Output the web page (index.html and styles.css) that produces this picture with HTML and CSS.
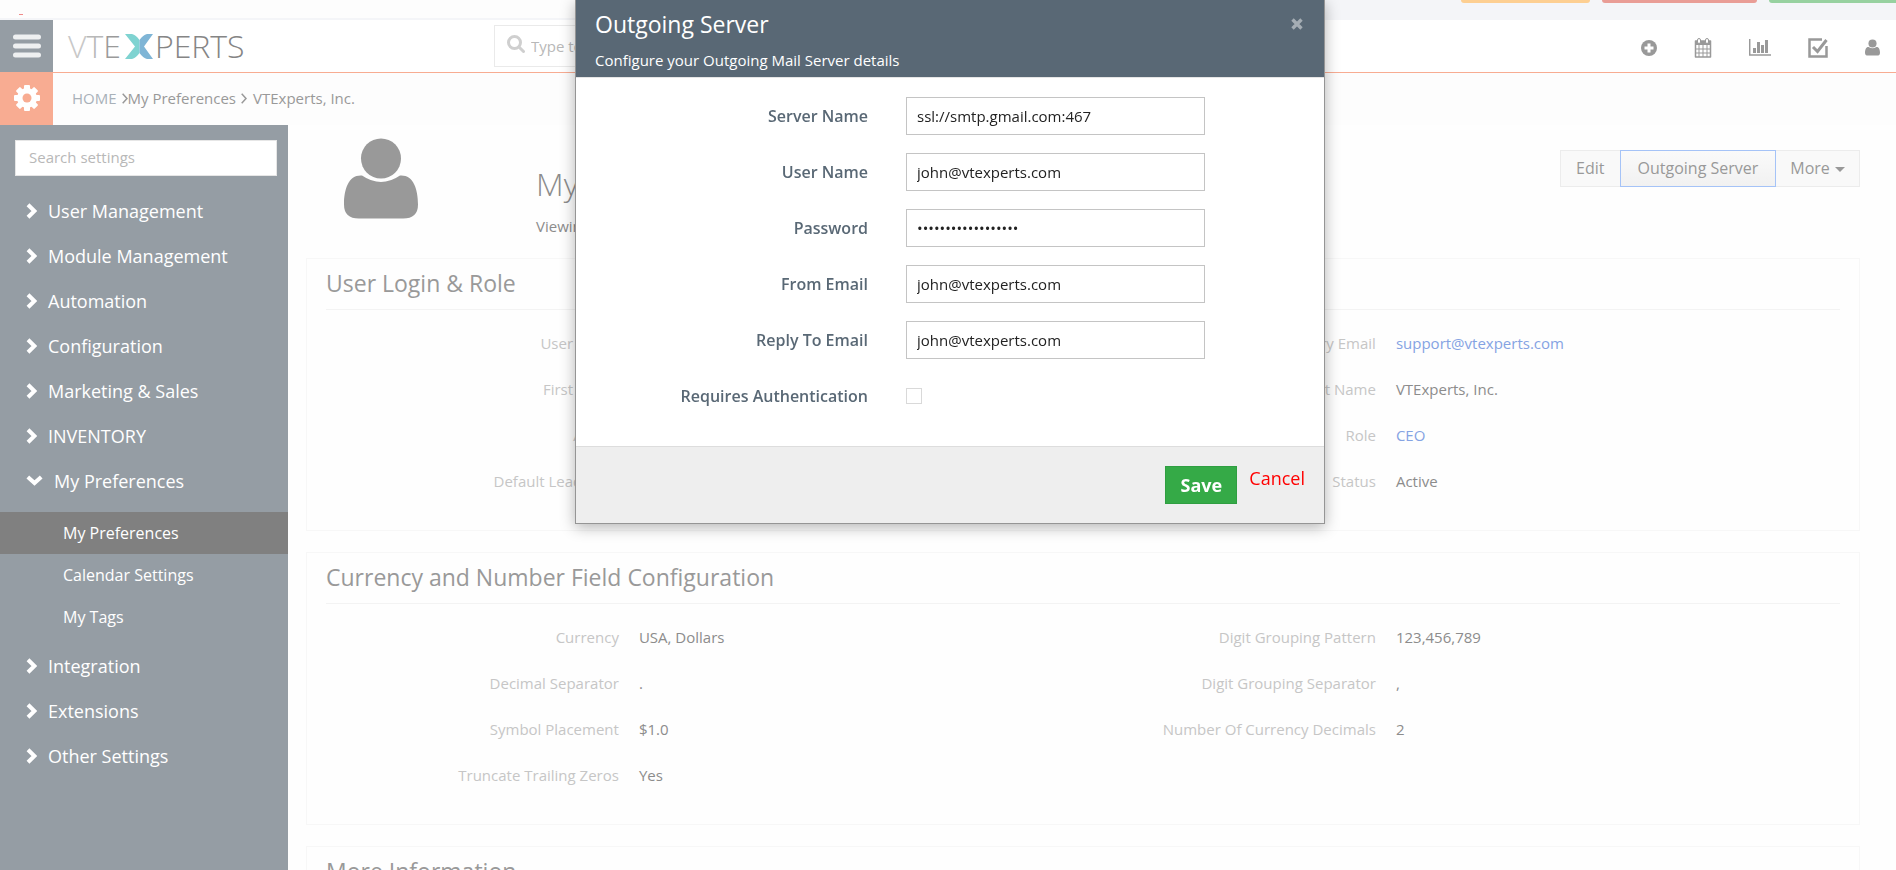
FILE: index.html
```html
<!DOCTYPE html>
<html lang="en">
<head>
  <meta charset="utf-8"/>
  <title>VTExperts - My Preferences</title>
  <link rel="stylesheet" href="styles.css">
</head>
<body>
	<svg class="sprite" aria-hidden="true">
		<symbol id="icoUser" viewBox="0 0 74 80">
			<ellipse cx="37" cy="20" rx="20" ry="20"/>
			<path d="M18 37 Q37 50 56 37 C69 36 74 50 74 66 Q74 80 59 80 H15 Q0 80 0 66 C0 50 5 36 18 37z"/>
		</symbol>
		<symbol id="icoRight" viewBox="0 0 11 16">
			<path d="M2 1.8 L8.4 8 L2 14.2" fill="none" stroke="currentColor" stroke-width="4"/>
		</symbol>
		<symbol id="icoDown" viewBox="0 0 17 11">
			<path d="M1.8 2 L8.5 8 L15.2 2" fill="none" stroke="currentColor" stroke-width="4"/>
		</symbol>
	</svg>

	<div class="topstrip">
		<div class="tab"></div>
		<div class="tags">
			<span class="tag orange"></span>
			<span class="tag red"></span>
			<span class="tag green"></span>
		</div>
	</div>

	<header class="header">
		<button class="menu" aria-label="Menu">
			<svg width="28" height="24" viewBox="0 0 28 24"><path d="M2.500 3H25.500M2.500 12H25.500M2.500 21H25.500" stroke="#eef0f1" stroke-width="5" stroke-linecap="round"/></svg>
		</button>
		<a class="logo" href="#" aria-label="VTExperts">
			<span class="logo-v">V</span><span class="logo-t">T</span><span class="logo-e">E</span>
			<svg width="29" height="25" viewBox="0 0 29 25">
				<path d="M0 0 H7 Q11 1 14.500 6 V19 Q11 24 7 25 H0 L10 12.500z" fill="#7fd3d1"/>
				<path d="M28 0 H22 Q18 1 14.500 6 V19 Q18 24 22 25 H28 L19 12.500z" fill="#7fb5d6"/>
			</svg>
			<span class="logo-rest">PERTS</span>
		</a>
		<form class="search">
			<svg width="18" height="18" viewBox="0 0 18 18"><circle cx="7.500" cy="7.500" r="6" fill="none" stroke="#cfcfcf" stroke-width="3"/><path d="M12 12 L16.500 16.500" stroke="#cfcfcf" stroke-width="3" stroke-linecap="round"/></svg>
			<input type="text" placeholder="Type to search" aria-label="Search">
		</form>
		<nav class="tools">
			<a href="#" aria-label="Quick create">
				<svg width="16" height="16" viewBox="0 0 16 16"><circle cx="8" cy="8" r="8"/><path d="M8 3.500V12.500M3.500 8H12.500" stroke="#fff" stroke-width="3"/></svg>
			</a>
			<a href="#" aria-label="Calendar">
				<svg width="18" height="20" viewBox="0 0 18 20"><path d="M1.500 3H16.500V19H1.500z" fill="none" stroke="#999" stroke-width="1.500" stroke-linejoin="round"/><path d="M1 3H17V7H1z"/><path d="M5 7V19M9 7V19M13 7V19M1 11H17M1 15H17" stroke="#999" stroke-width="1"/><rect x="3.500" y="0.500" width="3" height="5" rx="1.500" fill="#fff" stroke="#999"/><rect x="11.500" y="0.500" width="3" height="5" rx="1.500" fill="#fff" stroke="#999"/></svg>
			</a>
			<a href="#" aria-label="Reports">
				<svg width="22" height="17" viewBox="0 0 22 17"><path d="M0.700 0V16H22" fill="none" stroke="#999" stroke-width="1.500"/><path d="M4 9H7V14H4zM8 3H11V14H8zM12 6H15V14H12zM16 1H19V14H16z"/></svg>
			</a>
			<a href="#" aria-label="Tasks">
				<svg width="20" height="20" viewBox="0 0 20 20"><path d="M14 1.500H1.500V18.500H18.500V8" fill="none" stroke="#999" stroke-width="2.500"/><path d="M5 9L9.500 13.500L18.500 2" fill="none" stroke="#999" stroke-width="3"/></svg>
			</a>
			<a href="#" aria-label="User">
				<svg width="15" height="17"><use href="#icoUser"/></svg>
			</a>
		</nav>
	</header>

	<div class="crumbbar">
		<a class="gear" href="#" aria-label="Settings">
			<svg width="26" height="26" viewBox="-13 -13 26 26">
				<g fill="#fff">
					<circle r="10"/>
					<rect x="-3" y="-13" width="6" height="26" rx="1"/>
					<rect x="-3" y="-13" width="6" height="26" rx="1" transform="rotate(45)"/>
					<rect x="-3" y="-13" width="6" height="26" rx="1" transform="rotate(90)"/>
					<rect x="-3" y="-13" width="6" height="26" rx="1" transform="rotate(135)"/>
				</g>
				<circle r="4.500" fill="#f8ac92"/>
			</svg>
		</a>
		<nav class="crumbs">
			<a class="home" href="#">HOME</a>
			<svg width="6" height="11" viewBox="0 0 6 11"><path d="M0.700 0.700L5 5.500L0.700 10.300" fill="none" stroke="#999" stroke-width="1.500"/></svg>
			<a href="#">My Preferences</a>
			<svg class="sep" width="6" height="11" viewBox="0 0 6 11"><path d="M0.700 0.700L5 5.500L0.700 10.300" fill="none" stroke="#999" stroke-width="1.500"/></svg>
			<a href="#">VTExperts, Inc.</a>
		</nav>
	</div>

	<div class="page">
		<aside class="sidebar">
			<input class="filter" type="text" placeholder="Search settings" aria-label="Search settings">
			<ul class="groups">
				<li><a href="#"><svg width="11" height="16"><use href="#icoRight"/></svg>User Management</a></li>
				<li><a href="#"><svg width="11" height="16"><use href="#icoRight"/></svg>Module Management</a></li>
				<li><a href="#"><svg width="11" height="16"><use href="#icoRight"/></svg>Automation</a></li>
				<li><a href="#"><svg width="11" height="16"><use href="#icoRight"/></svg>Configuration</a></li>
				<li><a href="#"><svg width="11" height="16"><use href="#icoRight"/></svg>Marketing &amp; Sales</a></li>
				<li><a href="#"><svg width="11" height="16"><use href="#icoRight"/></svg>INVENTORY</a></li>
				<li>
					<a href="#"><svg width="17" height="11"><use href="#icoDown"/></svg>My Preferences</a>
					<ul class="sub">
						<li><a class="active" href="#">My Preferences</a></li>
						<li><a href="#">Calendar Settings</a></li>
						<li><a href="#">My Tags</a></li>
					</ul>
				</li>
				<li><a href="#"><svg width="11" height="16"><use href="#icoRight"/></svg>Integration</a></li>
				<li><a href="#"><svg width="11" height="16"><use href="#icoRight"/></svg>Extensions</a></li>
				<li><a href="#"><svg width="11" height="16"><use href="#icoRight"/></svg>Other Settings</a></li>
			</ul>
		</aside>

		<main class="content">
			<div class="title">
				<svg class="avatar" width="74" height="81"><use href="#icoUser"/></svg>
				<div class="title-text">
					<h1>My Preferences</h1>
					<p>Viewing details</p>
				</div>
				<div class="actions">
					<button>Edit</button>
					<button class="focus">Outgoing Server</button>
					<button>More <span class="caret"></span></button>
				</div>
			</div>

			<section class="block">
				<h2>User Login &amp; Role</h2>
				<dl class="fields">
					<div><dt>User Name</dt><dd>john</dd></div>
					<div><dt>Primary Email</dt><dd><a href="#">support@vtexperts.com</a></dd></div>
					<div><dt>First Name</dt><dd>John</dd></div>
					<div><dt>Last Name</dt><dd>VTExperts, Inc.</dd></div>
					<div><dt>Admin</dt><dd>Yes</dd></div>
					<div><dt>Role</dt><dd><a href="#">CEO</a></dd></div>
					<div><dt>Default Lead View</dt><dd>Today</dd></div>
					<div><dt>Status</dt><dd>Active</dd></div>
				</dl>
			</section>

			<section class="block">
				<h2>Currency and Number Field Configuration</h2>
				<dl class="fields">
					<div><dt>Currency</dt><dd>USA, Dollars</dd></div>
					<div><dt>Digit Grouping Pattern</dt><dd>123,456,789</dd></div>
					<div><dt>Decimal Separator</dt><dd>.</dd></div>
					<div><dt>Digit Grouping Separator</dt><dd>,</dd></div>
					<div><dt>Symbol Placement</dt><dd>$1.0</dd></div>
					<div><dt>Number Of Currency Decimals</dt><dd>2</dd></div>
					<div><dt>Truncate Trailing Zeros</dt><dd>Yes</dd></div>
				</dl>
			</section>

			<section class="block">
				<h2>More Information</h2>
			</section>
		</main>
	</div>

	<div class="overlay">
		<form class="modal" role="dialog" aria-labelledby="modalTitle">
			<div class="modal-header">
				<div>
					<h3 id="modalTitle">Outgoing Server</h3>
					<p>Configure your Outgoing Mail Server details</p>
				</div>
				<button type="button" class="close" aria-label="Close">
					<svg width="12" height="12" viewBox="0 0 12 12"><path d="M1.500 1.500L10.500 10.500M10.500 1.500L1.500 10.500" stroke="#a5adb4" stroke-width="3.400"/></svg>
				</button>
			</div>
			<div class="modal-body">
				<label for="txServer">Server Name</label>
				<input type="text" id="txServer" value="ssl://smtp.gmail.com:467">
				<label for="txUser">User Name</label>
				<input type="text" id="txUser" value="john@vtexperts.com">
				<label for="txPassword">Password</label>
				<input type="password" id="txPassword" value="abcdefghijklmnopqr">
				<label for="txFrom">From Email</label>
				<input type="text" id="txFrom" value="john@vtexperts.com">
				<label for="txReply">Reply To Email</label>
				<input type="text" id="txReply" value="john@vtexperts.com">
				<label for="cbAuth">Requires Authentication</label>
				<input type="checkbox" id="cbAuth">
			</div>
			<div class="modal-footer">
				<button type="submit" class="save">Save</button>
				<a class="cancel" href="#">Cancel</a>
			</div>
		</form>
	</div>
</body>
</html>
```
FILE: styles.css
```css
* {
	box-sizing: border-box;
}

body {
	margin: 0;
	height: 100vh;
	overflow: hidden;
	display: flex;
	flex-direction: column;
	background-color: #fefefe;
	color: #8c8c8c;
	font-family: "Open Sans", sans-serif;
	font-size: 15px;
	line-height: 20px;
}

a {
	color: inherit;
	text-decoration: none;
}

ul, dl, dd, h1, h2, h3, p {
	margin: 0;
	padding: 0;
	list-style: none;
}

button, input {
	font-family: inherit;
	font-size: inherit;
}

svg {
	flex: none;
	fill: #999;
}

.sprite {
	position: absolute;
	width: 0;
	height: 0;
}

/* strip above the header */
.topstrip {
	flex: none;
	height: 20px;
	display: flex;
	justify-content: space-between;
	background-color: #f4f5f8;
}

.tab {
	width: 32%;
	height: 18px;
	background-color: #fdfdfd;
}

.tab::before {
	content: "";
	display: block;
	width: 4px;
	height: 14px;
	margin-left: 19px;
	border-bottom: 1px solid #f08a8a;
}

.tags {
	display: flex;
	gap: 12px;
}

.tag {
	height: 3px;
	border-radius: 0 0 3px 3px;
}

.orange {
	width: 129px;
	background-color: #fdcf92;
}

.red {
	width: 155px;
	background-color: #e99d96;
}

.green {
	width: 127px;
	background-color: #97d1a0;
	border-radius: 0 0 0 3px;
}

.header {
	flex: none;
	height: 53px;
	display: flex;
	align-items: center;
	background-color: #fff;
	border-bottom: 1px solid #f8ac92;
}

.menu {
	width: 53px;
	height: 52px;
	padding: 3px 0 0;
	border: 0;
	background-color: #959da4;
}

.logo {
	display: flex;
	align-items: center;
	width: 441px;
	padding-left: 15px;
	font-size: 32px;
	font-weight: 300;
	line-height: 52px;
	color: #858585;
}

.logo svg {
	margin: 0 1px 0 4px;
}

.logo-v {
	color: #c8c8c8;
}

.logo-t {
	color: #b8b8b8;
}

.logo-e {
	color: #9a9a9a;
}

.search {
	display: flex;
	align-items: center;
	gap: 6px;
	width: 400px;
	height: 42px;
	padding: 0 12px;
	border: 1px solid #eaeaea;
}

.search svg {
	margin-bottom: 4px;
}

.search input {
	flex: 1;
	padding: 0;
	border: 0;
	color: #aaa;
}

.tools {
	display: flex;
	align-items: center;
	gap: 37px;
	margin-left: auto;
	padding: 3px 16px 0 0;
}

.tools a {
	display: flex;
}

.crumbbar {
	flex: none;
	display: flex;
	height: 52px;
	background-color: #fdfdfd;
}

.gear {
	width: 53px;
	display: flex;
	align-items: center;
	justify-content: center;
	padding-bottom: 3px;
	background-color: #f8ac92;
}

.crumbs {
	display: flex;
	align-items: center;
	padding: 0 0 2px 19px;
	color: #999;
}

.home {
	margin-right: 5px;
	color: #a9b1b9;
}

.sep {
	margin: 0 6px 0 5px;
}

.page {
	flex: 1;
	min-height: 0;
	display: flex;
}

/* settings menu */
.sidebar {
	flex: none;
	width: 288px;
	padding-top: 15px;
	background-color: #959da4;
	color: #fff;
}

.filter {
	display: block;
	width: 262px;
	height: 36px;
	margin: 0 0 12px 15px;
	padding: 0 13px 2px;
	border: 1px solid #e6e6e6;
}

input::placeholder {
	color: #b8b8b8;
}

.groups a {
	display: flex;
	align-items: center;
	gap: 11px;
	height: 45px;
	padding-left: 26px;
	font-size: 18px;
}

.groups svg {
	color: #fff;
}

.groups .sub {
	padding: 9px 0 5px;
}

.groups .sub a {
	height: 42px;
	padding-left: 63px;
	font-size: 16px;
}

.groups .sub .active {
	background-color: #808080;
}

.content {
	flex: 1;
	min-width: 0;
	padding: 0 36px 0 18px;
}

.title {
	display: flex;
	align-items: flex-start;
	height: 133px;
}

.avatar {
	margin: 13px 118px 0 38px;
}

.title-text {
	flex: 1;
	padding-top: 37px;
}

h1 {
	margin-bottom: 10px;
	font-size: 32px;
	line-height: 44px;
	font-weight: 300;
	color: #8c8c8c;
}

.actions {
	display: flex;
	padding-top: 25px;
}

.actions button {
	height: 37px;
	padding: 0 15px 2px;
	border: 1px solid #ececec;
	border-right-width: 0;
	background-color: #f9f9f9;
	color: #999;
	font-size: 16px;
}

.actions button:last-child {
	padding: 0 14px 2px;
	border-right-width: 1px;
	border-left-width: 0;
}

.actions .focus {
	padding: 0 17px 2px;
	border: 1px solid #a5c3f7;
	background: linear-gradient(#fafafa, #f1f1f1);
}

.caret {
	display: inline-block;
	margin-left: 1px;
	vertical-align: 2px;
	border: 5px solid transparent;
	border-top-color: #999;
	border-bottom-width: 0;
}

.block {
	margin-bottom: 21px;
	padding: 0 19px 23px;
	border: 1px solid #f7f7f7;
}

h2 {
	height: 51px;
	border-bottom: 1px solid #f3f3f3;
	font-size: 23px;
	line-height: 48px;
	font-weight: 400;
	color: #999;
}

.fields {
	display: grid;
	grid-template-columns: 1fr 1fr;
	padding-top: 13px;
}

.fields div {
	display: grid;
	grid-template-columns: 31fr 47fr;
	gap: 20px;
	height: 46px;
	line-height: 40px;
}

dt {
	text-align: right;
	color: #c6c6c6;
}

dd a {
	color: #85a3e3;
}

/* outgoing server popup */
.overlay {
	position: fixed;
	inset: 0;
	display: flex;
	justify-content: center;
	align-items: flex-start;
	padding-left: 4px;
}

.modal {
	width: 750px;
	background-color: #fff;
	border: 1px solid #959595;
	border-top: 0;
	box-shadow: 0 3px 14px rgba(0, 0, 0, 0.3);
}

.modal-header {
	display: flex;
	justify-content: space-between;
	align-items: flex-start;
	height: 78px;
	padding: 9px 21px 0 19px;
	border-bottom: 1px solid #e5e5e5;
	background-color: #596875;
	color: #fff;
}

h3 {
	margin-bottom: 11px;
	font-size: 23px;
	line-height: 30px;
	font-weight: 400;
}

.close {
	display: flex;
	padding: 9px 0;
	border: 0;
	background: none;
}

.modal-body {
	display: grid;
	grid-template-columns: 292px 299px;
	grid-auto-rows: 38px;
	gap: 18px 38px;
	align-items: center;
	padding: 19px 0 31px;
}

.modal-body label {
	text-align: right;
	font-size: 16px;
	font-weight: 600;
	color: #596875;
}

.modal-body input {
	height: 38px;
	padding: 0 10px;
	border: 1px solid #c4c4c4;
	color: #222;
}

.modal-body input[type=checkbox] {
	appearance: none;
	width: 16px;
	height: 16px;
	margin: 0;
	padding: 0;
	border-color: #d9d9d9;
}

.modal-footer {
	display: flex;
	justify-content: flex-end;
	align-items: flex-start;
	gap: 12px;
	height: 77px;
	padding: 19px;
	border-top: 1px solid #ddd;
	background-color: #eee;
	font-size: 18px;
}

.save {
	width: 72px;
	height: 38px;
	padding: 0;
	border: 1px solid #2f9e41;
	background-color: #35aa47;
	color: #fff;
	font-weight: 700;
}

.cancel {
	line-height: 25px;
	color: #f00;
}
```
